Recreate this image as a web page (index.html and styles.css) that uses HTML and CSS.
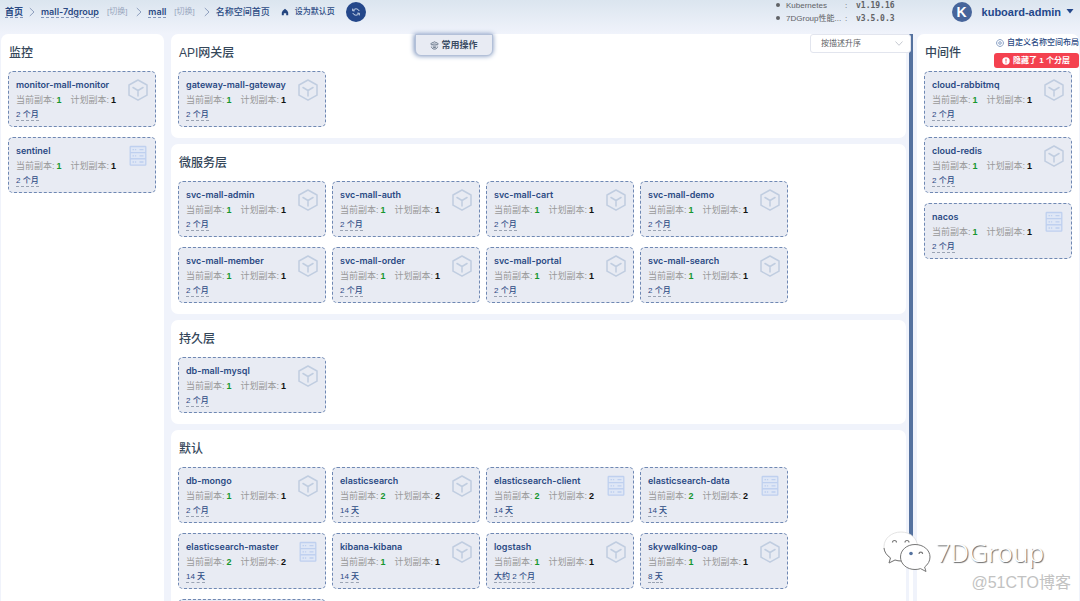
FILE: index.html
```html
<!DOCTYPE html>
<html lang="zh-CN">
<head>
<meta charset="utf-8">
<title>Kuboard - mall</title>
<link rel="stylesheet" href="styles.css">
</head>
<body>
<svg class="sprite" aria-hidden="true">
  <symbol id="cube" viewBox="0 0 20 22"><path d="M10 1 19 6V16.200L10 21.200 1 16.200V6ZM5 8.500 10 11.500 15 8.500M10 11.500V17" fill="none" stroke="#c0cde0" stroke-width="1.500" stroke-linejoin="round" stroke-linecap="round"/></symbol>
  <symbol id="server" viewBox="0 0 20 22"><g fill="#dfe7f6" stroke="#bfd0ef" stroke-width="1.300"><rect x="2.200" y="1.500" width="15.600" height="6.200" rx=".6"/><rect x="2.200" y="7.700" width="15.600" height="6.200" rx=".6"/><rect x="2.200" y="13.900" width="15.600" height="6.200" rx=".6"/></g><path d="M4.500 4.600h1.600M7 4.600h1.200M4.500 10.800h1.600M7 10.800h1.200M4.500 17h1.600M7 17h1.200M11.500 4.600h4M11.500 10.800h4M11.500 17h4" stroke="#bfd0ef" stroke-width="1.300"/></symbol>
  <symbol id="chevron" viewBox="0 0 6 10"><path d="M.8 1 5 5 .8 9" fill="none" stroke="#8f9fbe" stroke-width="1"/></symbol>
</svg>

<header class="topbar">
  <nav class="crumbs">
    <a class="crumb" href="#">首页</a>
    <svg class="sep"><use href="#chevron"/></svg>
    <a class="crumb" href="#">mall-7dgroup</a><a class="switch" href="#">[切换]</a>
    <svg class="sep"><use href="#chevron"/></svg>
    <a class="crumb" href="#">mall</a><a class="switch" href="#">[切换]</a>
    <svg class="sep"><use href="#chevron"/></svg>
    <span class="current">名称空间首页</span>
    <button class="set-default"><svg viewBox="0 0 8 8"><path d="M4 .8Q7 2.800 7.200 4.500V7.300H5.200V5.200H2.800V7.300H.8V4.500Q1 2.800 4 .8Z" fill="#24457f"/></svg>设为默认页</button>
    <button class="refresh" aria-label="刷新"><svg viewBox="0 0 10 10"><path d="M2 3.600A3.400 3.400 0 0 1 8.200 4M8 6.400A3.400 3.400 0 0 1 1.800 6M1.700 1.600V3.800H3.800M8.300 8.400V6.200H6.200" fill="none" stroke="#c9d5e8" stroke-width="1"/></svg></button>
  </nav>
  <ul class="versions">
    <li><span class="product">Kubernetes</span><span class="colon">:</span><b>v1.19.16</b></li>
    <li><span class="product">7DGroup性能...</span><span class="colon">:</span><b>v3.5.0.3</b></li>
  </ul>
  <button class="account"><span class="avatar">K</span>kuboard-admin<svg viewBox="0 0 8 5"><path d="M.5 0H7.500L4 4.500Z" fill="#24478a"/></svg></button>
</header>

<main class="board">
  <section class="panel">
    <h2>监控</h2>
    <div class="cards">
      <article class="card"><div><h3>monitor-mall-monitor</h3><p>当前副本:<b class="now">1</b>计划副本:<b>1</b></p><span class="age">2 个月</span></div><svg><use href="#cube"/></svg></article>
      <article class="card"><div><h3>sentinel</h3><p>当前副本:<b class="now">1</b>计划副本:<b>1</b></p><span class="age">2 个月</span></div><svg><use href="#server"/></svg></article>
    </div>
  </section>

  <div class="layers">
    <section class="panel">
      <h2>API网关层</h2>
      <div class="cards">
        <article class="card"><div><h3>gateway-mall-gateway</h3><p>当前副本:<b class="now">1</b>计划副本:<b>1</b></p><span class="age">2 个月</span></div><svg><use href="#cube"/></svg></article>
      </div>
    </section>
    <section class="panel">
      <h2>微服务层</h2>
      <div class="cards">
        <article class="card"><div><h3>svc-mall-admin</h3><p>当前副本:<b class="now">1</b>计划副本:<b>1</b></p><span class="age">2 个月</span></div><svg><use href="#cube"/></svg></article>
        <article class="card"><div><h3>svc-mall-auth</h3><p>当前副本:<b class="now">1</b>计划副本:<b>1</b></p><span class="age">2 个月</span></div><svg><use href="#cube"/></svg></article>
        <article class="card"><div><h3>svc-mall-cart</h3><p>当前副本:<b class="now">1</b>计划副本:<b>1</b></p><span class="age">2 个月</span></div><svg><use href="#cube"/></svg></article>
        <article class="card"><div><h3>svc-mall-demo</h3><p>当前副本:<b class="now">1</b>计划副本:<b>1</b></p><span class="age">2 个月</span></div><svg><use href="#cube"/></svg></article>
        <article class="card"><div><h3>svc-mall-member</h3><p>当前副本:<b class="now">1</b>计划副本:<b>1</b></p><span class="age">2 个月</span></div><svg><use href="#cube"/></svg></article>
        <article class="card"><div><h3>svc-mall-order</h3><p>当前副本:<b class="now">1</b>计划副本:<b>1</b></p><span class="age">2 个月</span></div><svg><use href="#cube"/></svg></article>
        <article class="card"><div><h3>svc-mall-portal</h3><p>当前副本:<b class="now">1</b>计划副本:<b>1</b></p><span class="age">2 个月</span></div><svg><use href="#cube"/></svg></article>
        <article class="card"><div><h3>svc-mall-search</h3><p>当前副本:<b class="now">1</b>计划副本:<b>1</b></p><span class="age">2 个月</span></div><svg><use href="#cube"/></svg></article>
      </div>
    </section>
    <section class="panel">
      <h2>持久层</h2>
      <div class="cards">
        <article class="card"><div><h3>db-mall-mysql</h3><p>当前副本:<b class="now">1</b>计划副本:<b>1</b></p><span class="age">2 个月</span></div><svg><use href="#cube"/></svg></article>
      </div>
    </section>
    <section class="panel">
      <h2>默认</h2>
      <div class="cards">
        <article class="card"><div><h3>db-mongo</h3><p>当前副本:<b class="now">1</b>计划副本:<b>1</b></p><span class="age">2 个月</span></div><svg><use href="#cube"/></svg></article>
        <article class="card"><div><h3>elasticsearch</h3><p>当前副本:<b class="now">2</b>计划副本:<b>2</b></p><span class="age">14 天</span></div><svg><use href="#cube"/></svg></article>
        <article class="card"><div><h3>elasticsearch-client</h3><p>当前副本:<b class="now">2</b>计划副本:<b>2</b></p><span class="age">14 天</span></div><svg><use href="#server"/></svg></article>
        <article class="card"><div><h3>elasticsearch-data</h3><p>当前副本:<b class="now">2</b>计划副本:<b>2</b></p><span class="age">14 天</span></div><svg><use href="#server"/></svg></article>
        <article class="card"><div><h3>elasticsearch-master</h3><p>当前副本:<b class="now">2</b>计划副本:<b>2</b></p><span class="age">14 天</span></div><svg><use href="#server"/></svg></article>
        <article class="card"><div><h3>kibana-kibana</h3><p>当前副本:<b class="now">1</b>计划副本:<b>1</b></p><span class="age">14 天</span></div><svg><use href="#cube"/></svg></article>
        <article class="card"><div><h3>logstash</h3><p>当前副本:<b class="now">1</b>计划副本:<b>1</b></p><span class="age">大约 2 个月</span></div><svg><use href="#cube"/></svg></article>
        <article class="card"><div><h3>skywalking-oap</h3><p>当前副本:<b class="now">1</b>计划副本:<b>1</b></p><span class="age">8 天</span></div><svg><use href="#cube"/></svg></article>
        <article class="card"></article>
      </div>
    </section>
  </div>

  <div class="track"><div class="thumb"></div></div>

  <section class="panel">
    <h2>中间件</h2>
    <div class="layout-tools">
      <a href="#"><svg viewBox="0 0 8 8" fill="none" stroke="#6f8bb8" stroke-width=".8"><circle cx="4" cy="4" r="1.300"/><path d="M2.400.9 4 .5 5.600.9 7 2.500 7.500 4 7 5.500 5.600 7.100 4 7.500 2.400 7.100 1 5.500.5 4 1 2.500Z"/></svg>自定义名称空间布局</a>
      <button class="hidden-note"><svg viewBox="0 0 8 8"><circle cx="4" cy="4" r="3.700" fill="#fff"/><path d="M4 1.800V4.600M4 5.300V6.300" stroke="#f4414f" stroke-width="1"/></svg>隐藏了 1 个分层</button>
    </div>
    <div class="cards">
      <article class="card"><div><h3>cloud-rabbitmq</h3><p>当前副本:<b class="now">1</b>计划副本:<b>1</b></p><span class="age">2 个月</span></div><svg><use href="#cube"/></svg></article>
      <article class="card"><div><h3>cloud-redis</h3><p>当前副本:<b class="now">1</b>计划副本:<b>1</b></p><span class="age">2 个月</span></div><svg><use href="#cube"/></svg></article>
      <article class="card"><div><h3>nacos</h3><p>当前副本:<b class="now">1</b>计划副本:<b>1</b></p><span class="age">2 个月</span></div><svg><use href="#server"/></svg></article>
    </div>
  </section>

  <button class="actions"><svg viewBox="0 0 10 10" fill="none" stroke="#3b4c63" stroke-width=".8"><path d="M1 3.800C.8 2.600 2 1.800 3.300 2 3.800.6 6.200.6 6.700 2 8 1.800 9.200 2.600 9 3.800M1.200 4.200H3L3.500 3.400H6.500L7 4.200H8.800M3 5.600H7M1.500 6.200C2 8 3 9 5 9S8 8 8.500 6.200M3.500 7.300H6.500"/></svg>常用操作</button>
  <div class="sort">
    <select aria-label="排序"><option>按描述升序</option></select>
    <svg viewBox="0 0 8 5"><path d="M.5.5 4 4.300 7.500.5" fill="none" stroke="#c0c4cc" stroke-width=".9"/></svg>
  </div>
</main>

<div class="watermark">
  <div class="brand">
    <svg viewBox="0 0 48 42"><path d="M18 1C8.500 1 1 7.500 1 15.500c0 4.800 2.500 8.700 6.500 11.400L6 32l6-3c2 .7 5 1 7.500.8C29 29 34.500 23 34.500 15.500 34.500 7.500 27.500 1 18 1Z" fill="#fff" stroke="#dcdcdc" stroke-width=".8"/><path d="M1 17c.3 4 2.800 7.500 6.500 9.900L6 32l6-3c2 .7 4 1 6 1" fill="none" stroke="#777"/><path d="M32 13.500c-8.200 0-14.500 5.500-14.500 12.500S23.800 38.500 32 38.500c2 0 4-.3 5.500-.9L43 40.500 41.600 36C45 33.500 47 30 47 26c0-7-6.500-12.500-15-12.500Z" fill="#fff" fill-opacity=".9" stroke="#777"/><g fill="none" stroke="#777" stroke-width="1.200"><path d="M9.500 11.500a2 2 0 0 1 4 0M22 11.500a2 2 0 0 1 4 0M36 23a1.800 1.800 0 0 1 3.600 0"/></g><circle cx="28" cy="22.500" r="1.800" fill="#55729f"/></svg>
    <span>7DGroup</span>
  </div>
  <small>@51CTO博客</small>
</div>
</body>
</html>
```
FILE: styles.css
```css
* { box-sizing: border-box; }

body {
  margin: 0;
  height: 100vh;
  overflow: hidden;
  display: flex;
  flex-direction: column;
  background: #f0f3fb;
  color: #2b4a84;
  font: 8px/14px "Liberation Sans", "Noto Sans CJK SC", sans-serif;
}

h2, h3, p, ul { margin: 0; padding: 0; }
a { color: inherit; text-decoration: none; }
button { border: 0; padding: 0; background: none; color: inherit; font: inherit; display: flex; align-items: center; }
.sprite { position: absolute; width: 0; height: 0; }

.topbar {
  flex: none;
  display: flex;
  align-items: center;
  height: 34px;
  padding: 0 6px 11px 5px;
  background: linear-gradient(#dbe5ef, #f0f3fb);
}
.crumbs { display: flex; align-items: center; flex: 1; font-size: 9px; font-weight: 500; white-space: nowrap; }
.crumb { line-height: 11px; border-bottom: 1px dashed #8296ba; font-family: Inter, "Noto Sans CJK SC", sans-serif; font-weight: 600; }
.switch { margin-left: 8px; font-size: 8px; font-weight: 400; color: #98a5bd; }
.sep { width: 6px; height: 10px; margin: 0 6px; }
.switch + .sep { margin-left: 9px; }
.current { font-weight: 500; }
.set-default { margin-left: 11px; gap: 6px; font-size: 8px; }
.set-default svg { width: 8px; height: 8px; }
.refresh { margin-left: 11px; width: 20px; height: 20px; border-radius: 50%; background: #24478a; justify-content: center; }
.refresh svg { width: 10px; height: 10px; }

.versions { margin-right: 57px; list-style: none; color: #606266; line-height: 13px; }
.versions li { display: flex; align-items: center; }
.versions li::before { content: ""; width: 4px; height: 4px; margin-right: 6px; border-radius: 50%; background: #606266; }
.product { width: 58px; }
.colon { width: 12px; padding-left: 1px; }
.versions b { font-family: "DejaVu Sans Mono", monospace; }

.account { font: 700 11px/20px "Liberation Sans", sans-serif; color: #24478a; }
.avatar { width: 20px; height: 20px; margin-right: 10px; border-radius: 50%; background: #47659b; color: #fff; font-size: 14px; text-align: center; }
.account svg { width: 8px; height: 5px; margin-left: 5px; }

.board {
  position: relative;
  flex: 1;
  min-height: 0;
  display: grid;
  grid-template-columns: 163px 1fr 4px 166px;
  padding: 0 1px;
}
.panel { position: relative; background: #fff; border-radius: 7px 7px 0 0; padding: 0 7px 11px; }
.panel h2 { height: 37px; padding-left: 1px; font: 500 12px/39px "Liberation Sans", "Noto Sans CJK SC", sans-serif; color: #35475a; }
.layers { display: flex; flex-direction: column; gap: 6px; margin: 0 3px 0 7px; min-height: 0; overflow: hidden; }
.layers .panel { flex: none; border-radius: 7px; }
.track { background: #fff; }
.thumb { height: 89%; background: #55729f; }
.track + .panel { margin-left: 4px; }

.cards { display: flex; flex-wrap: wrap; gap: 10px 6px; }
.card {
  display: flex;
  justify-content: space-between;
  width: 148px;
  min-height: 56px;
  padding: 5px 7px;
  border: 1px dashed #6f88b3;
  border-radius: 5px;
  background: #e8ebf3;
}
.card h3 { font: 600 9px/15px Inter, sans-serif; white-space: nowrap; }
.card p { display: flex; line-height: 16px; color: #999; white-space: nowrap; font-size: 9px; }
.card b { font-size: 9px; color: #111; margin-left: 2px; }
.card .now { color: #16962f; width: 14px; }
.card svg { flex: none; width: 20px; height: 22px; margin-top: 2px; }
.age { display: block; width: fit-content; margin-top: 1px; line-height: 11px; border-bottom: 1px dashed #9aa3b3; font-weight: 500; }

.layout-tools { position: absolute; top: 2px; right: 0; display: flex; flex-direction: column; align-items: flex-end; gap: 3px; font-weight: 500; white-space: nowrap; }
.layout-tools a { display: flex; align-items: center; gap: 3px; }
.layout-tools svg { width: 8px; height: 8px; }
.hidden-note { height: 15px; padding: 0 9px 0 8px; gap: 3px; border-radius: 3px; background: #f4414f; color: #fff; font-weight: 700; }

.actions {
  position: absolute;
  left: 42%;
  top: 0;
  transform: translateX(-50%);
  height: 22px;
  padding: 0 14px;
  gap: 3px;
  border: 1px solid #b3c0d8;
  border-radius: 0 0 6px 6px;
  background: #e8ebf3;
  box-shadow: 0 0 5px #7890bb;
  color: #3b4c63;
  font-size: 9px;
  font-weight: 700;
}
.actions svg { width: 9px; height: 9px; }

.sort { position: absolute; top: 0; right: 169px; width: 101px; }
.sort select {
  appearance: none;
  width: 100%;
  height: 19px;
  padding: 0 10px;
  border: 1px solid #e2e5ee;
  border-radius: 3px;
  background: #fff;
  color: #606266;
  font: inherit;
}
.sort svg { position: absolute; right: 8px; top: 7px; width: 8px; height: 5px; }

.watermark { position: absolute; right: 9px; bottom: 8px; display: flex; flex-direction: column; align-items: flex-end; }
.brand { display: flex; align-items: center; gap: 5px; margin-right: 27px; color: #fff; font: 300 26px/42px "Noto Sans", sans-serif; text-shadow: 1px 1px 1px #666; }
.brand svg { width: 48px; height: 42px; }
.watermark small { font-size: 16px; line-height: 20px; color: #c2c2c2; }
```
